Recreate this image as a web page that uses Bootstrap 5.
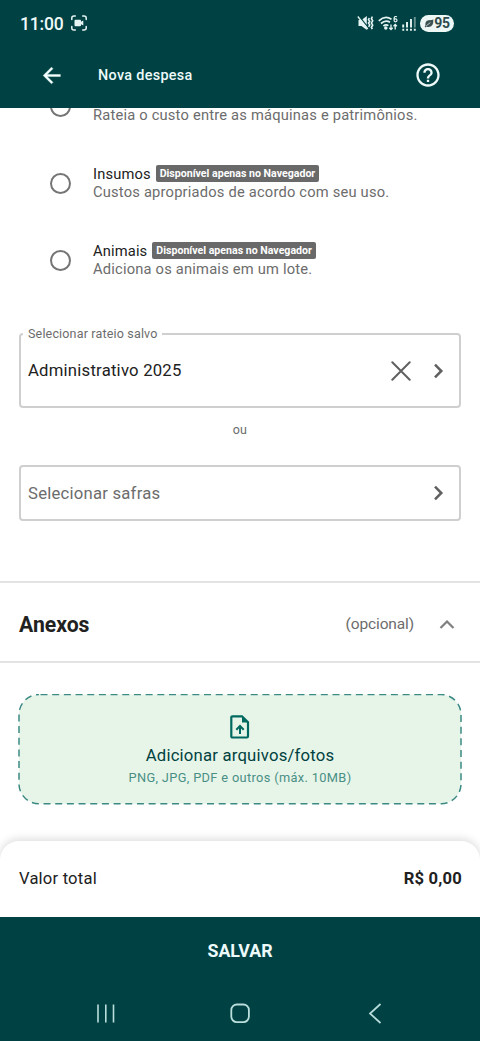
<!DOCTYPE html>
<html lang="pt-BR">
<head>
<meta charset="utf-8">
<meta name="viewport" content="width=device-width, initial-scale=1">
<title>Nova despesa</title>
<link href="https://cdn.jsdelivr.net/npm/bootstrap@5.3.0/dist/css/bootstrap.min.css" rel="stylesheet">
<style>
  body { font-family: Roboto, "Noto Sans", sans-serif; color: #212121; letter-spacing: .2px; height: 1041px; overflow: hidden; }
  svg { display: block; flex: none; }
  .bg-brand { background: #004243; color: #fff; }
  .status { height: 46px; padding: 0 26px 0 20px; }
  .clock { font-size: 17.5px; font-weight: 500; line-height: 20px; letter-spacing: -.2px; color: #eefafa; padding-top: 1px; }
  .battery { width: 34px; height: 17px; color: #2d4b4c; background: #edf7f6; font-size: 14px; font-weight: 700; letter-spacing: -.2px; line-height: 17px; }
  .appbar { height: 62px; padding: 0 39px 4px 39px; }
  .appbar-title { font-size: 14.4px; font-weight: 500; letter-spacing: .32px; color: #eefafa; margin-left: 34px; padding-top: 1px; }
  .option-list { margin-top: -40px; }
  .option { height: 77px; padding-left: 50px; gap: 22px; font-size: 14.7px; line-height: 17.3px; }
  .radio-dot { width: 21px; height: 21px; border: 2.200px solid #757575; flex: none; margin-top: -1px; }
  .option-title { height: 17.3px; gap: 5px; color: #212121; letter-spacing: .15px; }
  .muted { color: #6c6c6c; }
  .tag-web { height: 17px; padding: 0 4px; border-radius: 2px; background: #696969; color: #fff; font-size: 10.6px; font-weight: 700; letter-spacing: 0; line-height: 17px; margin-top: -2px; }
  .field { margin: 0 19px; border: 2px solid #cfcfcf; border-radius: 4px; padding: 0 8px 0 7px; font-size: 16.7px; }
  .field-text { padding-top: 1px; letter-spacing: .22px; }
  .field-saved { height: 75px; margin-top: 34px; }
  .field-gap { height: 56px; }
  .field-label { position: absolute; top: -10px; left: 2px; padding: 0 4px 0 5px; background: #fff; font-size: 12.5px; line-height: 18px; color: #6c6c6c; letter-spacing: .17px; }
  .or-line { height: 57px; padding-bottom: 12px; font-size: 12.5px; }
  .section-head { height: 82px; margin-top: 60px; padding: 5px 25px 0 19px; border-top: 2px solid #e3e3e3; border-bottom: 2px solid #e3e3e3; }
  .section-title { font-size: 21.2px; font-weight: 700; letter-spacing: 0; padding-top: 1px; }
  .section-note { font-size: 15.5px; letter-spacing: -.13px; margin-right: 25px; padding-top: 1px; }
  .drop { margin: 31px 18px 0; height: 111px; padding-top: 20px; }
  .drop-frame { position: absolute; inset: 0; }
  .drop-title { font-size: 16.7px; line-height: 20px; color: #00413f; margin-top: 6px; }
  .drop-hint { font-size: 12.8px; line-height: 16px; color: #4a8f85; margin-top: 4px; letter-spacing: .35px; }
  .total { height: 76px; padding: 1px 18px 0 19px; border-radius: 19px 19px 0 0; background: #fff; box-shadow: 0 -2px 8px rgba(0,0,0,.14); font-size: 16.6px; }
  .save { height: 67px; border: 0; padding: 2px 0 0; font-size: 17.8px; font-weight: 700; letter-spacing: 0; color: #eefafa; }
  .sysnav { height: 57px; }
</style>
</head>
<body class="d-flex flex-column bg-white">
<header class="bg-brand flex-shrink-0">
  <div class="status d-flex align-items-center">
    <span class="clock">11:00</span>
    <svg class="ms-2" width="16" height="16" viewBox="0 0 16 16" fill="none" stroke="#e6f5f4" stroke-width="1.5" stroke-linecap="round"><path d="M.8 4.600V3Q.8 1 3 1h1.300M11.700 1H13Q15.200 1 15.200 3v1.600M15.200 11.400V13Q15.200 15 13 15h-1.300M4.300 15H3Q.8 15 .8 13v-1.600"/><path fill="#e6f5f4" stroke="none" d="M4.500 4.800H9q1 0 1 1v.9l2.300-1.200v5L10 9.300v.9q0 1-1 1H4.500q-1 0-1-1V5.800q0-1 1-1z"/></svg>
    <div class="ms-auto d-flex align-items-center gap-1">
      <svg width="17" height="16" viewBox="0 0 17 16"><path fill="#e6f5f4" d="M1.500 5h3L9.800 1v14l-5.300-4h-3z"/><path d="M1.600.6 12 13.600" stroke="#004243" stroke-width="1.500"/><path d="M.8 1.500l10 12.500" stroke="#e6f5f4" stroke-width="1.300"/><path d="M12.300 3l-.8 1.700 1.200 1.700-1.200 1.700 1.200 1.700-1 2M15.400 1.600l-1 2 1.300 2.200-1.300 2.200 1.300 2.200-1.300 2.200.9 1.800" fill="none" stroke="#e6f5f4" stroke-width="1.600"/></svg>
      <svg width="20" height="16" viewBox="0 0 20 16" fill="none" stroke="#e6f5f4" stroke-width="1.700"><path d="M.8 5.800Q7 0 13.500 4.200M3 8.500q4.500-4 9-1.200M5.400 11q2.600-2.200 5-.3"/><circle cx="7.800" cy="12.900" r=".9" fill="#e6f5f4"/><path stroke-width="1.300" d="M13 9.500v5M11.300 12.800l1.700 1.800 1.700-1.800M17.200 14.600v-5M15.500 11.300l1.700-1.800 1.700 1.800"/><path stroke-width="1.200" d="M19 1.800q-3-1.200-3 2.500M16 5.300a1.500 1.500 0 1 0 3 0 1.500 1.500 0 0 0-3 0z"/></svg>
      <svg width="14" height="15" viewBox="0 0 14 15" stroke="#e6f5f4" stroke-width="1.900"><path d="M1.200 8.500v3M5 6v5.500M9 3v8.500"/><path stroke-opacity=".45" d="M12.800 1v10.500"/><path stroke-dasharray="1.900 1.950" d="M.3 13.800h13.600"/></svg>
      <span class="battery rounded-pill d-flex align-items-center justify-content-center"><svg width="10" height="9" viewBox="0 0 11 10"><path fill="#3c5152" d="M1.500 7.800Q.8 2 5 1.500T10.300.6Q10.800 8.800 5 8.800 3.500 8.800 2.600 8.200L1.500 9.400.6 8.700z"/><path d="M2.500 7.500 7 4" stroke="#edf7f6" stroke-width=".8"/></svg>95</span>
    </div>
  </div>
  <div class="appbar d-flex align-items-center">
    <svg width="25" height="25" viewBox="0 0 24 24" fill="#f4ffff"><path d="M20.500 11H7.830l5.590-5.590L12 4l-8 8 8 8 1.410-1.410L7.830 13H20.500z" stroke="#f4ffff" stroke-width=".4"/></svg>
    <span class="appbar-title">Nova despesa</span>
    <svg class="ms-auto" width="28" height="28" viewBox="0 0 24 24" fill="#eefafa" style="margin-right:-1px"><path d="M11 18h2v-2h-2v2zm1-16C6.480 2 2 6.480 2 12s4.480 10 10 10 10-4.480 10-10S17.520 2 12 2zm0 18c-4.410 0-8-3.590-8-8s3.590-8 8-8 8 3.590 8 8-3.590 8-8 8zm0-14c-2.210 0-4 1.790-4 4h2c0-1.100.9-2 2-2s2 .9 2 2c0 2-3 1.750-3 5h2c0-2.250 3-2.500 3-5 0-2.210-1.790-4-4-4z"/></svg>
  </div>
</header>

<main class="flex-grow-1 overflow-hidden">
  <div class="option-list">
    <div class="option d-flex align-items-center">
      <span class="radio-dot rounded-circle"></span>
      <div><div class="option-title"></div><div class="muted">Rateia o custo entre as máquinas e patrimônios.</div></div>
    </div>
    <div class="option d-flex align-items-center">
      <span class="radio-dot rounded-circle"></span>
      <div><div class="option-title d-flex align-items-center">Insumos <span class="tag-web">Disponível apenas no Navegador</span></div><div class="muted">Custos apropriados de acordo com seu uso.</div></div>
    </div>
    <div class="option d-flex align-items-center">
      <span class="radio-dot rounded-circle"></span>
      <div><div class="option-title d-flex align-items-center">Animais <span class="tag-web">Disponível apenas no Navegador</span></div><div class="muted">Adiciona os animais em um lote.</div></div>
    </div>
  </div>

  <div class="field field-saved position-relative d-flex align-items-center">
    <span class="field-label">Selecionar rateio salvo</span>
    <span class="field-text">Administrativo 2025</span>
    <svg class="ms-auto" width="20" height="20" viewBox="0 0 20 20" fill="none" stroke="#606060" stroke-width="2" stroke-linecap="round"><path d="m1.300 1.300 17.400 17.400M18.700 1.300 1.300 18.700"/></svg>
    <svg width="26" height="26" viewBox="0 0 26 26" fill="none" stroke="#606060" stroke-width="2.500" style="margin-left:14px"><path d="m10 6.700 6.300 6.300-6.300 6.300"/></svg>
  </div>
  <div class="or-line d-flex align-items-center justify-content-center muted">ou</div>
  <div class="field field-gap d-flex align-items-center muted">
    <span class="field-text">Selecionar safras</span>
    <svg class="ms-auto" width="26" height="26" viewBox="0 0 26 26" fill="none" stroke="#606060" stroke-width="2.500"><path d="m10 6.700 6.300 6.300-6.300 6.300"/></svg>
  </div>

  <div class="section-head d-flex align-items-center">
    <h2 class="section-title mb-0">Anexos</h2>
    <span class="ms-auto muted section-note">(opcional)</span>
    <svg width="16" height="10" viewBox="0 0 16 10" fill="none" stroke="#808080" stroke-width="2.200"><path d="m1.500 8 6.500-6.500 6.500 6.500"/></svg>
  </div>

  <div class="drop position-relative d-flex flex-column align-items-center">
    <svg class="drop-frame" width="444" height="111" viewBox="0 0 444 111"><rect x="1" y=".5" width="442" height="109.300" rx="20" fill="#e7f5e9" stroke="#3c8a84" stroke-width="1.500" stroke-dasharray="7 4.680" stroke-dashoffset="-1.500"/></svg>
    <svg class="position-relative" width="22" height="26" viewBox="0 0 22 26"><path d="M3.500 2.300h9.500l6 6v14q0 1.200-1.200 1.200H3.500q-1.200 0-1.200-1.200V3.500q0-1.200 1.200-1.200z" fill="none" stroke="#00695f" stroke-width="2.200"/><path d="M13 2v6.500h6.500z" fill="#00695f"/><path d="M11 20v-7M7.300 15.800 11 12l3.700 3.800" fill="none" stroke="#00695f" stroke-width="2"/></svg>
    <div class="drop-title position-relative">Adicionar arquivos/fotos</div>
    <div class="drop-hint position-relative">PNG, JPG, PDF e outros (máx. 10MB)</div>
  </div>
</main>

<footer class="flex-shrink-0 position-relative">
  <div class="total d-flex align-items-center justify-content-between"><span>Valor total</span><strong>R$ 0,00</strong></div>
  <button class="save bg-brand w-100 d-block" type="button">SALVAR</button>
  <div class="sysnav bg-brand d-flex align-items-center justify-content-center">
    <svg width="480" height="57" viewBox="0 0 480 57" fill="none" stroke="#b9dedb" stroke-width="1.600"><path d="M98 20.500v18M105.800 20.500v18M113.500 20.500v18"/><rect x="231.300" y="20.500" width="17.600" height="17.600" rx="5.500" stroke-width="1.800"/><path d="m380.500 20-10.500 9.500 10.500 9.500" stroke-width="1.700"/></svg>
  </div>
</footer>
<script src="https://cdn.jsdelivr.net/npm/bootstrap@5.3.0/dist/js/bootstrap.bundle.min.js"></script>
</body>
</html>
